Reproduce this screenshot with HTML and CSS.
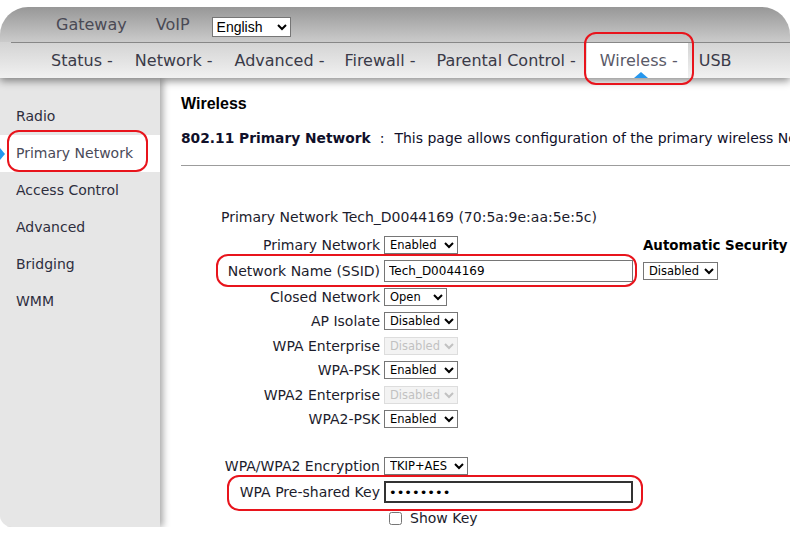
FILE: index.html
```html
<!DOCTYPE html>
<html lang="en">
<head>
  <meta charset="UTF-8">
  <title>Wireless - Primary Network</title>
  <link rel="stylesheet" href="styles.css">
</head>
<body>

<div class="frame">
  <div class="header">
    <div class="topbar">
      <a class="top-link gw">Gateway</a>
      <a class="top-link voip">VoIP</a>
      <select class="lang">
        <option>English</option>
      </select>
    </div>
    <div class="navbar">
      <ul class="mainnav">
        <li>Status -</li>
        <li>Network -</li>
        <li>Advanced -</li>
        <li class="narrow">Firewall -</li>
        <li>Parental Control -</li>
        <li class="active">Wireless -<span class="mark mark-tab"></span></li>
        <li>USB</li>
      </ul>
    </div>
  </div>

  <div class="main">
    <ul class="sidebar">
      <li>Radio</li>
      <li class="active">Primary Network<span class="mark mark-side"></span></li>
      <li>Access Control</li>
      <li>Advanced</li>
      <li>Bridging</li>
      <li>WMM</li>
    </ul>

    <div class="content">
      <h2>Wireless</h2>
      <p class="desc"><b>802.11 Primary Network</b><span class="sep">:</span>This page allows configuration of the primary wireless Network and its security settings.</p>
      <hr>

      <div class="form">
        <div class="title">Primary Network Tech_D0044169 (70:5a:9e:aa:5e:5c)</div>

        <div class="label">Primary Network</div>
        <select class="sel w74"><option>Enabled</option><option>Disabled</option></select>
        <div class="auto-title">Automatic Security</div>

        <div class="label">Network Name (SSID)<span class="mark mark-ssid"></span></div>
        <input class="text" type="text" value="Tech_D0044169">
        <select class="sel w75 auto-sel"><option>Disabled</option><option>Enabled</option></select>

        <div class="label">Closed Network</div>
        <select class="sel w63"><option>Open</option><option>Closed</option></select>

        <div class="label">AP Isolate</div>
        <select class="sel w74"><option>Disabled</option><option>Enabled</option></select>

        <div class="label">WPA Enterprise</div>
        <select class="sel w74" disabled><option>Disabled</option></select>

        <div class="label">WPA-PSK</div>
        <select class="sel w74"><option>Enabled</option><option>Disabled</option></select>

        <div class="label">WPA2 Enterprise</div>
        <select class="sel w74" disabled><option>Disabled</option></select>

        <div class="label">WPA2-PSK</div>
        <select class="sel w74"><option>Enabled</option><option>Disabled</option></select>

        <div class="gap"></div>

        <div class="label">WPA/WPA2 Encryption</div>
        <select class="sel w84"><option>TKIP+AES</option><option>AES</option></select>

        <div class="label">WPA Pre-shared Key<span class="mark mark-key"></span></div>
        <input class="text key" type="password" value="password">

        <label class="showkey"><input type="checkbox">Show Key</label>
      </div>
    </div>
  </div>
</div>

</body>
</html>
```

FILE: styles.css
```css
body {
  margin: 0;
  background: #fff;
  font-family: "DejaVu Sans", Verdana, sans-serif;
  color: #1c1c2c;
}

.frame {
  width: 790px;
  height: 520px;
  margin-top: 7px;
  overflow: hidden;
  border-radius: 28px 28px 0 12px;
  display: flex;
  flex-direction: column;
}

/* top header */
.header {
  position: relative;
  z-index: 2;
  box-shadow: 0 3px 8px rgba(0,0,0,0.45);
}

.topbar {
  height: 35px;
  display: flex;
  align-items: center;
  padding-left: 56px;
  background: linear-gradient(#979797, #cbcbcb);
}

.top-link {
  font-size: 16px;
  color: #4a4a55;
}

.gw { margin-right: 29px; }
.voip { margin-right: 22px; }

.lang {
  width: 79px;
  height: 20px;
  font: 14px "Liberation Sans", Arial, sans-serif;
  border: 1px solid #767676;
  border-radius: 0;
  background: #fff;
  color: #000;
  margin-top: 4px;
}

.navbar {
  background: linear-gradient(#d3d3d3, #f1f1f1);
}

.mainnav {
  list-style: none;
  margin: 0 0 0 11px;
  padding: 0 0 0 29px;
  height: 35px;
  border-top: 1px solid #878787;
  display: flex;
}

.mainnav li {
  font-size: 16px;
  line-height: 35px;
  padding: 0 11px;
  color: #3a3a48;
  white-space: nowrap;
}

.mainnav li.narrow {
  padding: 0 10px 0 9px;
}

.mainnav li.active {
  position: relative;
  background: #fff;
  color: #5a5a68;
  padding: 0 10px 0 13px;
}

.mainnav li.active:after {
  content: "";
  position: absolute;
  left: 50%;
  bottom: 0;
  margin-left: -3px;
  border: 7px solid transparent;
  border-bottom: 6px solid #2597ee;
  border-top: 0;
}

/* red call-outs */
.mark {
  position: absolute;
  z-index: 3;
  border: 2px solid #e8141c;
  border-radius: 12px;
  pointer-events: none;
}

.mark-tab { left: -3px; right: -6px; top: -11px; bottom: -7px; }
.mark-side { left: 7px; right: 12px; top: -5px; bottom: 0; }
.mark-ssid { left: 35px; right: -257px; top: -4px; bottom: -2px; }
.mark-key { left: 46px; right: -263px; top: -3px; bottom: -5px; }

/* body */
.main {
  flex: 1;
  display: flex;
  min-height: 0;
}

.sidebar {
  position: relative;
  z-index: 1;
  width: 160px;
  flex-shrink: 0;
  margin: 0;
  padding: 20px 0 0;
  list-style: none;
  background: #e6e6e6;
  box-shadow: 3px 0 7px rgba(0,0,0,0.35);
}

.sidebar li {
  height: 37px;
  line-height: 37px;
  padding-left: 16px;
  font-size: 14px;
  color: #2e2e3e;
  white-space: nowrap;
}

.sidebar li.active {
  position: relative;
  background: #fff;
  color: #4a4a58;
}

.sidebar li.active:before {
  content: "";
  position: absolute;
  left: 0;
  top: 13px;
  border-top: 6px solid transparent;
  border-bottom: 6px solid transparent;
  border-left: 5px solid #2597ee;
}

.content {
  flex: 1;
  min-width: 0;
  padding: 16px 0 0 21px;
}

h2 {
  margin: 0;
  font: bold 16px/20px "Liberation Sans", Arial, sans-serif;
  color: #000;
}

.desc {
  margin: 14px 0 0;
  font-size: 14px;
  line-height: 20px;
  white-space: nowrap;
  color: #10102a;
}

.desc b {
  font-size: 13.8px;
}

.sep {
  margin: 0 10px 0 9px;
}

hr {
  margin: 17px 0 0;
  border: 0;
  border-top: 1px solid #9c9c9c;
}

/* form */
.form {
  display: grid;
  grid-template-columns: 199px 255px auto;
  column-gap: 4px;
  margin-top: 41px;
  font-size: 14px;
}

.title {
  grid-column: 1 / -1;
  padding-left: 40px;
  line-height: 20px;
  margin-bottom: 6px;
  white-space: nowrap;
}

.label {
  grid-column: 1;
  position: relative;
  min-height: 24.5px;
  display: flex;
  align-items: center;
  justify-content: flex-end;
  white-space: nowrap;
}

.sel {
  grid-column: 2;
  align-self: center;
  justify-self: start;
  height: 18px;
  padding: 0 0 0 1px;
  font: 11.5px "DejaVu Sans", Verdana, sans-serif;
  color: #000;
  background: #fff;
  border: 1px solid #767676;
  border-radius: 0;
}

.sel:disabled {
  color: #a8a8a8;
  background: #efefef;
  border-color: #cfcfcf;
}

.w63 { width: 63px; }
.w74 { width: 74px; }
.w75 { width: 75px; }
.w84 { width: 84px; }

.auto-title {
  grid-column: 3;
  align-self: center;
  font-weight: bold;
  font-size: 13.4px;
  white-space: nowrap;
  color: #000;
}

.auto-sel {
  grid-column: 3;
}

.text {
  grid-column: 2;
  align-self: center;
  width: 249px;
  height: 22px;
  box-sizing: border-box;
  margin: 2px 0 3px;
  padding: 0 4px;
  font: 12px "DejaVu Sans", Verdana, sans-serif;
  border: 1px solid #767676;
  color: #000;
}

.text.key {
  border: 2px solid #333;
  margin: 3px 0;
  padding: 0 3px;
  font-size: 13px;
}

.gap {
  grid-column: 1 / -1;
  height: 22px;
}

.showkey {
  grid-column: 2;
  display: flex;
  align-items: center;
  min-height: 24.5px;
  font-size: 14px;
}

.showkey input {
  width: 13px;
  height: 13px;
  margin: 0 8px 0 5px;
}
```
